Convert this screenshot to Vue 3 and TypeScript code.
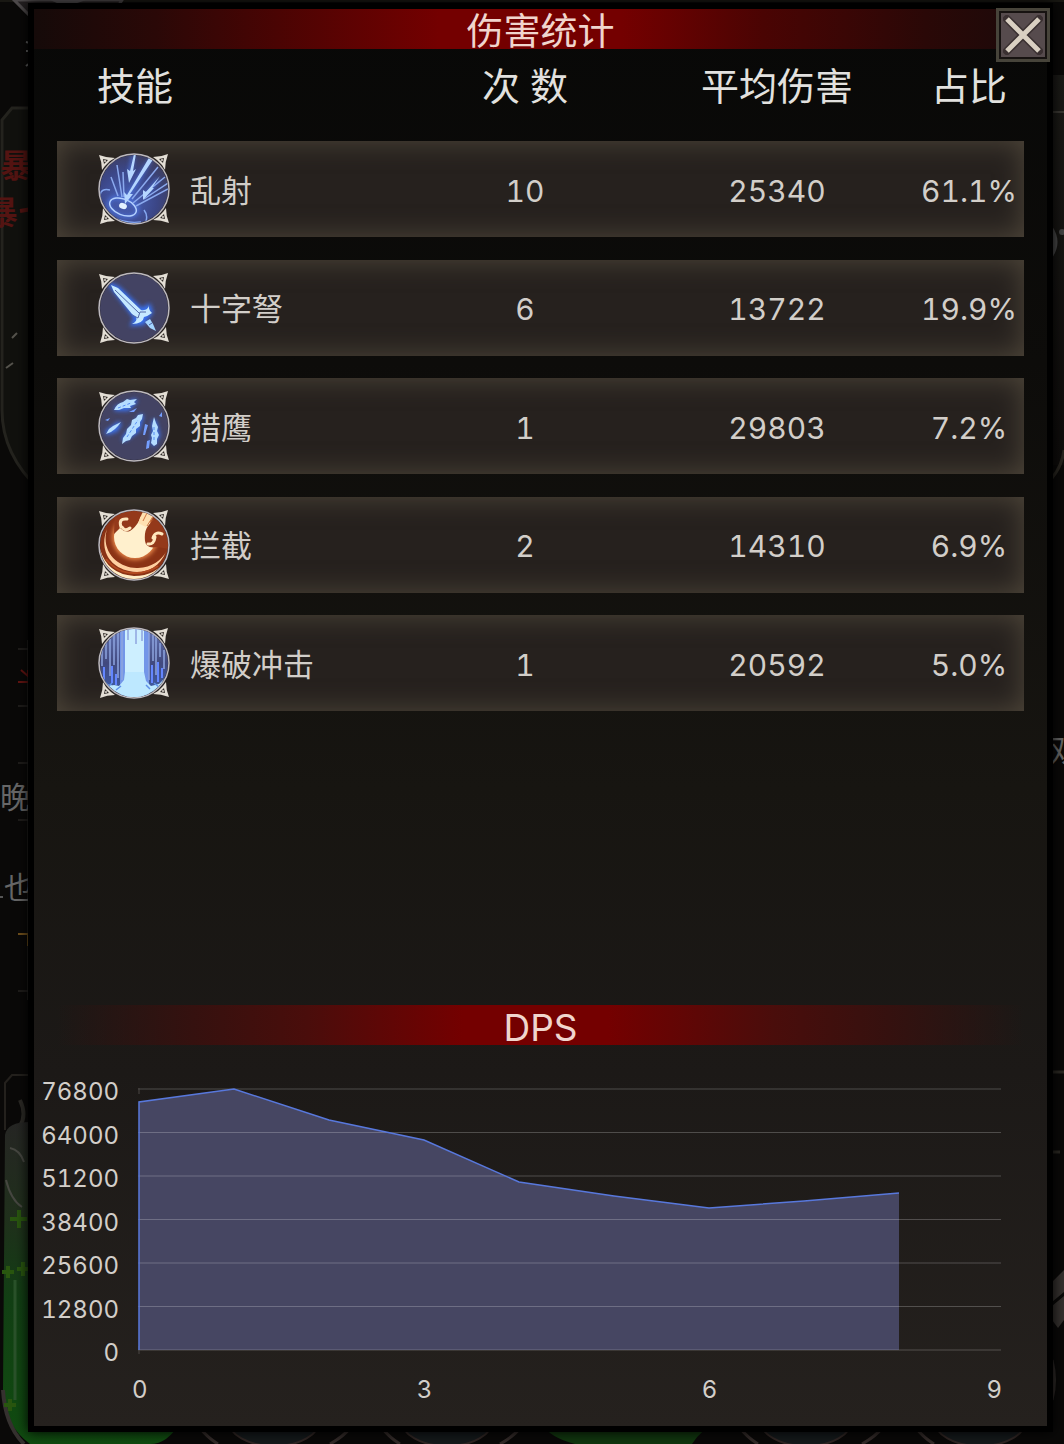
<script setup lang="ts">
import { computed, ref } from 'vue'

type IconKind = 'volley' | 'sword' | 'feathers' | 'crescent' | 'pillar'

interface Skill {
  icon: IconKind
  name: string
  count: number
  average: number
  share: string
}

const skills: Skill[] = [
  { icon: 'volley', name: '乱射', count: 10, average: 25340, share: '61.1%' },
  { icon: 'sword', name: '十字弩', count: 6, average: 13722, share: '19.9%' },
  { icon: 'feathers', name: '猎鹰', count: 1, average: 29803, share: '7.2%' },
  { icon: 'crescent', name: '拦截', count: 2, average: 14310, share: '6.9%' },
  { icon: 'pillar', name: '爆破冲击', count: 1, average: 20592, share: '5.0%' },
]

const yLabels = [76800, 64000, 51200, 38400, 25600, 12800, 0]
const xLabels = [0, 3, 6, 9]
const dps = [72950, 76800, 67700, 61800, 49400, 45300, 41800, 43900, 46200]

// Plot space: 95 units per second, 261 units for the full scale.
const STEP = 95
const SCALE = 261
const points = computed(() =>
  dps.map((v, i) => [i * STEP + 1, Math.round(1 + SCALE * (1 - v / 76800))]),
)
const linePath = computed(
  () => `M1 262 ` + points.value.map(([x, y]) => `L${x} ${y}`).join(' '),
)
const areaPath = computed(() => `${linePath.value} L${(dps.length - 1) * STEP + 1} 262 Z`)
const gridLines = yLabels.map((_, i) => 1 + (SCALE / 6) * i)

const open = ref(true)
</script>

<template>
  <div class="page">
    <svg class="scene" viewBox="0 0 1064 1444" preserveAspectRatio="none" aria-hidden="true">
      <defs>
        <linearGradient id="tube" x1="0" y1="0" x2="0" y2="1">
          <stop offset="0" stop-color="#262624" />
          <stop offset=".3" stop-color="#20301c" />
          <stop offset=".55" stop-color="#123f14" />
          <stop offset="1" stop-color="#104c10" />
        </linearGradient>
        <linearGradient id="wall" x1="0" y1="0" x2="0" y2="1">
          <stop offset="0" stop-color="#1b1a17" />
          <stop offset="1" stop-color="#0e0c0b" />
        </linearGradient>
      </defs>
      <path d="M0 1H1064" stroke="#28291f" />
      <path d="M14 0L30 16H112L122 0Z" fill="#242021" stroke="#4d494a" stroke-width="3" />
      <path d="M50 0l16 7 20-7z" fill="#555153" />
      <path d="M26 42l4 1M26 51h4M26 66l4-3" stroke="#676767" stroke-width="2" />
      <path d="M40 108H12L2 120V410Q2 455 40 490" fill="#11110e" stroke="#24231e" stroke-width="3" />
      <path d="M12 338l5-5M6 368l7-5" stroke="#55534d" stroke-width="2" />
      <g class="red-note">
        <text x="0" y="177">暴</text>
        <text x="-14" y="224">暴</text>
        <path d="M20 211l12-2" stroke="#541412" stroke-width="4" />
      </g>
      <path d="M28 640V1000M18 649h10M18 706h10M18 763h10M18 820h10M18 991h10" stroke="#35332f" fill="none" />
      <path d="M18 682h10M21 670l7 6v-6" stroke="#651412" stroke-width="2" fill="none" />
      <path d="M18 934h10v12" stroke="#70501c" stroke-width="2" fill="none" />
      <g class="grey-note">
        <text x="0" y="808">晚</text>
        <text x="4" y="898">也</text>
        <text x="1050" y="761">双</text>
      </g>
      <path d="M0 897h3" stroke="#555" stroke-width="2" />

      <path d="M40 1075H12L5 1083V1130" fill="none" stroke="#24211d" stroke-width="2" />
      <path d="M20 1100q7 15 0 26" fill="none" stroke="#2b2925" stroke-width="4" />
      <path d="M5 1135Q7 1122 30 1122V1422H180Q168 1444 150 1444H30Q4 1425 3 1390Z" fill="url(#tube)" />
      <path d="M10 1148q10 2 14 14M6 1180q5 20 16 27" fill="none" stroke="#464741" stroke-width="2" />
      <path d="M15 1280V1400" stroke="#2a522a" stroke-width="3" />
      <path d="M3 1390Q5 1425 24 1444" fill="none" stroke="#35312f" stroke-width="4" />
      <path d="M10 1219h17M19 1210v18M2 1272h12M8 1266v12M17 1269h12M23 1262v14M4 1405h12M10 1399v12" stroke="#29560f" stroke-width="4" />
      <path d="M540 1422H720Q700 1430 692 1444H575Q550 1438 540 1422Z" fill="#11370f" />
      <g fill="#15191b" stroke="#302624" stroke-width="2">
        <ellipse cx="274" cy="1420" rx="46" ry="26" />
        <ellipse cx="447" cy="1420" rx="46" ry="26" />
        <ellipse cx="806" cy="1420" rx="46" ry="26" />
        <ellipse cx="980" cy="1420" rx="46" ry="26" />
      </g>
      <path d="M200 1428q8 10 18 16M330 1444q14-8 20-16M382 1428q8 10 18 16M500 1444q14-8 20-16M740 1428q8 10 18 16M862 1444q14-8 20-16M916 1428q8 10 18 16" fill="none" stroke="#332b29" stroke-width="3" />

      <rect x="1048" y="75" width="16" height="390" fill="url(#wall)" />
      <path d="M1048 112h16" stroke="#393732" stroke-width="2" />
      <path d="M1052 226q11 16 0 32" fill="#4a4a4a" />
      <circle cx="1062" cy="232" r="3" fill="#444" />
      <path d="M1052 478Q1062 466 1064 450" fill="none" stroke="#28251f" stroke-width="3" />
      <path d="M1052 1072h12M1052 1152h8" stroke="#2b2823" stroke-width="3" />
      <path d="M1052 1282l12-12v22l-12 10zM1052 1306l12-10v24l-6 8-6-8z" fill="#35312e" />
      <path d="M1052 1360q5 20 0 40" fill="none" stroke="#302b29" stroke-width="3" />
    </svg>

    <main v-if="open" class="panel">
      <button class="close" type="button" aria-label="关闭" @click="open = false">
        <svg viewBox="0 0 40 40" aria-hidden="true">
          <path d="M4 4L36 36M36 4L4 36" stroke="#3a3031" stroke-width="8" stroke-linecap="round" />
          <path d="M4 4L36 36M36 4L4 36" stroke="#d9d0c2" stroke-width="5" />
        </svg>
      </button>

      <h1 class="banner">伤害统计</h1>

      <table class="stats">
        <thead>
          <tr>
            <th scope="col" class="skill-head">技能</th>
            <th scope="col">次 数</th>
            <th scope="col">平均伤害</th>
            <th scope="col">占比</th>
          </tr>
        </thead>
        <tbody>
          <tr v-for="s in skills" :key="s.name">
            <td class="skill">
              <svg class="icon" viewBox="0 0 72 72" aria-hidden="true">
                <defs>
                  <clipPath :id="`clip-${s.icon}`"><circle cx="36" cy="36" r="34" /></clipPath>
                  <filter :id="`glow-${s.icon}`" x="-30%" y="-30%" width="160%" height="160%">
                    <feGaussianBlur stdDeviation="2" />
                  </filter>
                  <radialGradient id="volley-bg" cx=".4" cy=".65" r=".7">
                    <stop offset="0" stop-color="#4a63bb" />
                    <stop offset=".6" stop-color="#3b4686" />
                    <stop offset="1" stop-color="#3e3d59" />
                  </radialGradient>
                  <linearGradient id="pillar-bg" x1="0" y1="0" x2="0" y2="1">
                    <stop offset="0" stop-color="#6476b7" />
                    <stop offset=".5" stop-color="#41497e" />
                    <stop offset="1" stop-color="#3e61b0" />
                  </linearGradient>
                </defs>
                <g v-for="a in [0, 90, 180, 270]" :key="a" :transform="`rotate(${a} 36 36)`">
                  <path d="M1 2Q9 5 17 5L12 8 7 13 4 17Q4 9 1 2Z" fill="#e3ded5" />
                  <path d="M5 6L10 7 6 11Z" fill="#302b28" />
                  <circle cx="7" cy="8" r="1" fill="#e3ded5" />
                </g>
                <circle cx="36" cy="36" r="36" fill="#25222a" />

                <g :clip-path="`url(#clip-${s.icon})`">
                  <g v-if="s.icon === 'volley'">
                    <path d="M0 0H72V72H0Z" fill="url(#volley-bg)" />
                    <g fill="none" stroke="#4f7df0" stroke-width="3" opacity=".8" :filter="`url(#glow-${s.icon})`">
                      <path d="M54 4L28 47M35 2L32 20M60 26L50 40" />
                      <ellipse cx="25" cy="54" rx="15" ry="9" transform="rotate(18 25 54)" />
                    </g>
                    <g fill="none" stroke="#8aa9ee" stroke-width="1.5">
                      <path d="M13 24L20 43M19 12L24 44M25 19L26 44M60 14L34 46M67 24L35 50M70 36L38 53M70 30L46 46" />
                    </g>
                    <path d="M52 3L56 5 32 41 35 41 27 51 26 39 29 42ZM36 1h2l-3 17 3-2-7 14-2-14 3 2ZM62 23L54 35 56 35 45 47 45 37 48 39Z" fill="#b5d6ff" />
                    <ellipse cx="25" cy="54" rx="14" ry="8" transform="rotate(22 25 54)" fill="none" stroke="#b4d1ff" stroke-width="1.5" />
                    <ellipse cx="25" cy="53" rx="4" ry="3" transform="rotate(18 25 53)" fill="#e4f1ff" />
                    <path d="M12 37Q3 35 2 42 3 57 14 64 28 71 43 69M46 57q4 5 2 11" fill="none" stroke="#85a8f1" stroke-width="1.5" />
                  </g>

                  <g v-else-if="s.icon === 'sword'">
                    <path d="M0 0H72V72H0Z" fill="#434363" />
                    <path d="M13 13L20 16 43 38 51 34 53 40 45 51 35 52 38 46Z" fill="#3971f0" stroke="#3971f0" stroke-width="4" :filter="`url(#glow-${s.icon})`" />
                    <path d="M13 13L20 16 43 38C48 39 51 36 51 32Q50 38 54 41 50 44 46 45 45 52 34 52 40 49 38 45L34 42 16 20Z" fill="#c6eaff" />
                    <path d="M17 18L41 41M34 43L40 46 42 40 48 40" fill="none" stroke="#526aa8" stroke-width="1" />
                    <path d="M47 50l5-3 3 5 3 7-6-3Z" fill="#a4d5ff" />
                    <path d="M51 53l3-2" stroke="#4a62ab" />
                  </g>

                  <g v-else-if="s.icon === 'feathers'">
                    <path d="M0 0H72V72H0Z" fill="#434363" />
                    <path d="M17 19L38 10 30 19ZM8 43L22 33 18 40ZM25 50L44 25 40 40ZM56 30L60 45 55 55Z" fill="#3b71ed" stroke="#3b71ed" stroke-width="4" :filter="`url(#glow-${s.icon})`" />
                    <g fill="#b5ddff">
                      <path d="M16 20Q19 13 25 12L29 9 32 10 39 9 36 12 38 14 32 16 33 18 26 18 21 20Z" />
                      <path d="M8 44L11 39 15 36 23 32 20 36 17 39 13 42Z" />
                      <path d="M24 54L25 48 28 44 29 39 33 35 34 30 38 28 40 25 45 24 44 29 42 32 42 36 38 39 38 43 34 46 32 50 28 51Z" />
                      <path d="M56 27L58 33 60 37 59 41 61 45 59 49 59 54 56 56 53 53 54 48 53 45 55 41 54 36Z" />
                      <path d="M31 22l8-4-3 4zM45 45l2-11 3 1-3 10zM48 59l1-8 3-1-1 8zM61 26l3-4v5zM7 30l5-2-2 3z" fill="#749fff" />
                    </g>
                    <path d="M29 47L40 30M56 50V35M20 18L33 13" stroke="#568df5" stroke-width="1" stroke-dasharray="3 2" />
                  </g>

                  <g v-else-if="s.icon === 'crescent'">
                    <path d="M0 0H72V72H0Z" fill="#8a3215" />
                    <circle cx="37" cy="28" r="23" fill="#e7864a" :filter="`url(#glow-${s.icon})`" />
                    <circle cx="37" cy="28" r="21" fill="#fff0cd" />
                    <path d="M18 0H45L41 12Q37 19 32 22 27 24 22 19L16 25Q16 12 18 0Z" fill="#94391a" />
                    <path d="M54 12L72 6V40L59 38Q48 40 47 32 46 22 50 17Z" fill="#94391a" />
                    <path d="M23 18Q20 9 29 10M24 18Q27 23 32 19" fill="none" stroke="#ffe7bd" stroke-width="3" stroke-linecap="round" />
                    <path d="M64 25Q57 22 55 29M50 35Q56 36 57 28" fill="none" stroke="#ffe7bd" stroke-width="3" stroke-linecap="round" />
                    <path d="M40 14L46 0H61L48 18Z" fill="#ffe0b0" />
                    <path d="M49 17L59 1M45 12L51 0" stroke="#d0733e" stroke-width="1" />
                    <path d="M9 20C2 44 22 60 40 59 54 59 64 50 68 43 60 61 45 65 31 62 11 58 1 40 9 20Z" fill="#ffd0a0" />
                    <path d="M1 36Q7 65 36 67 58 67 70 49L66 72H4Z" fill="#ffedc6" />
                    <path d="M8 50Q20 65 38 64 50 64 60 57" fill="none" stroke="#b34a20" stroke-width="2" />
                  </g>

                  <g v-else>
                    <path d="M0 0H72V72H0Z" fill="url(#pillar-bg)" />
                    <path d="M22 0H51V72H22Z" fill="#7396e8" />
                    <path d="M27 0H46V72H27Z" fill="#cdefff" />
                    <path d="M4 18V39M8 15V32M12 12V49M16 5V38M20 3V51M24 0V53M51 0V53M55 4V34M58 8V48M62 16V30M66 23V42M30 0V13M38 0V17M44 0V14" stroke="#8ea4df" stroke-width="1.5" />
                    <path d="M6 40V55M14 39V56M18 47V58M54 38V56M60 35V55M64 41V51" stroke="#6486ff" stroke-width="2" />
                    <path d="M2 48Q8 60 16 58L21 59 26 53 27 45H46L48 54 53 59 61 57 70 48 66 72H5Z" fill="#bde8ff" />
                    <path d="M3 51l8 8 3-3M69 51l-8 9-5-4M18 63l5-4M52 62l-4-4" fill="none" stroke="#5f91e8" stroke-width="1.5" />
                  </g>
                </g>
                <circle cx="36" cy="36" r="35" fill="none" stroke="#bdb9bd" stroke-width="1.5" />
              </svg>
              <span>{{ s.name }}</span>
            </td>
            <td>{{ s.count }}</td>
            <td>{{ s.average }}</td>
            <td>{{ s.share }}</td>
          </tr>
        </tbody>
      </table>

      <section class="dps">
        <h2 class="banner banner-dps">DPS</h2>
        <div class="chart">
          <div class="y-axis">
            <span v-for="y in yLabels" :key="y">{{ y }}</span>
          </div>
          <div class="plot">
            <svg viewBox="0 0 864 266" preserveAspectRatio="none" role="img" aria-label="DPS">
              <path :d="areaPath" fill="#464662" />
              <path
                v-for="g in gridLines"
                :key="g"
                :d="`M0 ${g}H863`"
                stroke="#ffffff"
                stroke-opacity=".22"
                vector-effect="non-scaling-stroke"
              />
              <path d="M1 -3V6M1 258V266" stroke="#4a4745" />
              <path :d="linePath" fill="none" stroke="#5878dc" stroke-width="1.5" vector-effect="non-scaling-stroke" />
            </svg>
          </div>
        </div>
        <div class="x-axis">
          <span v-for="x in xLabels" :key="x">{{ x }}</span>
        </div>
      </section>
    </main>
  </div>
</template>

<style>
body {
  margin: 0;
  background: #080706;
}
</style>

<style scoped>
.page {
  position: relative;
  box-sizing: border-box;
  display: flex;
  min-height: 100vh;
  padding: 3px 11px 12px 28px;
  overflow: hidden;
  background: #0a0908;
  color: #d2cec9;
  font-family: Inter, "Noto Sans CJK SC", sans-serif;
  font-variant-numeric: tabular-nums;
}

.scene {
  position: absolute;
  inset: 0;
  width: 100%;
  height: 100%;
}

.red-note {
  fill: #541412;
  font-size: 32px;
  font-weight: 700;
}

.grey-note {
  fill: #676767;
  font-size: 30px;
}

.panel {
  position: relative;
  box-sizing: border-box;
  flex: 1;
  min-width: 0;
  display: flex;
  flex-direction: column;
  border: 6px solid #000;
  background: linear-gradient(#080807, #0d0c0a 25%, #171511 55%, #1c1917 75%, #25211e);
  box-shadow: 0 0 12px #000;
}

.banner {
  flex: none;
  box-sizing: border-box;
  margin: 0;
  height: 40px;
  padding-top: 3px;
  line-height: 40px;
  text-align: center;
  font-size: 37px;
  font-weight: 400;
  color: #f0d5cd;
  background: linear-gradient(90deg, #150a09, #2a0807 12%, #4a0403 24%, #740000 40%, #740000 58%, #4a0403 72%, #2a0807 88%, #190a0a);
}

.close {
  position: absolute;
  top: -1px;
  right: -3px;
  box-sizing: border-box;
  display: flex;
  align-items: center;
  justify-content: center;
  width: 54px;
  height: 54px;
  padding: 0;
  border: 3px solid #47443a;
  background: #564b4d;
  box-shadow: inset 0 0 0 2px #171311;
  cursor: pointer;
}

.close svg {
  flex: none;
  width: 40px;
  height: 40px;
}

.stats {
  display: block;
  margin: 0 23px;
}

.stats thead {
  display: block;
}

.stats tr {
  display: grid;
  grid-template-columns: 353fr 230fr 274fr 110fr;
  align-items: center;
}

.stats thead tr {
  height: 74px;
  margin-bottom: 18px;
}

.stats tbody {
  display: flex;
  flex-direction: column;
  justify-content: space-between;
  min-height: 570px;
}

.stats tbody tr {
  height: 96px;
  background: #26211e;
  box-shadow: inset 0 0 28px #50483b;
}

.stats th,
.stats td {
  padding: 0;
  text-align: center;
  white-space: nowrap;
}

.stats th {
  font-size: 38px;
  font-weight: 400;
  line-height: 48px;
  color: #e2e1df;
}

.stats .skill-head {
  padding-left: 40px;
  text-align: left;
}

.stats td {
  padding-top: 3px;
  font-size: 30px;
  line-height: 40px;
}

.stats .skill {
  display: flex;
  align-items: center;
  gap: 20px;
  padding: 0 0 0 41px;
  font-size: 31px;
}

.skill span {
  padding-top: 3px;
}

.icon {
  flex: none;
  width: 72px;
  height: 72px;
}

.dps {
  margin-top: auto;
  padding-bottom: 24px;
}

.banner-dps {
  margin: 0 23px;
  background: linear-gradient(90deg, #2a0d0b00, #35110f 14%, #4a0d0b 26%, #740000 42%, #740000 57%, #4a0d0b 74%, #35110f 86%, #2a0d0b00);
}

.chart {
  display: flex;
  align-items: flex-start;
  margin-top: 35px;
  padding-right: 45px;
}

.y-axis {
  display: flex;
  flex-direction: column;
  justify-content: space-between;
  width: 85px;
  height: 285px;
  text-align: right;
  font-size: 24px;
  line-height: 24px;
}

.plot {
  flex: 1;
  min-width: 0;
  margin: 8px 0 0 19px;
}

.plot svg {
  display: block;
  width: 100%;
  height: 266px;
}

.x-axis {
  display: flex;
  justify-content: space-between;
  margin: 13px 45px 0 98px;
  font-size: 24px;
  line-height: 24px;
}
</style>
